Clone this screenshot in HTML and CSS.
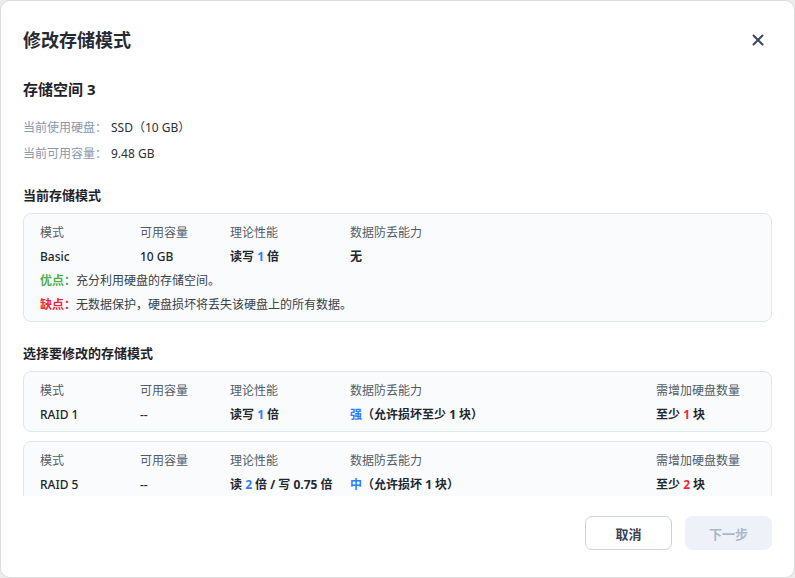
FILE: index.html
```html
<!DOCTYPE html>
<html lang="zh-CN">
<head>
    <meta charset="UTF-8">
    <meta name="viewport" content="width=device-width, initial-scale=1.0">
    <title>修改存储模式</title>
    <link rel="stylesheet" href="styles.css">
</head>
<body>
    <div class="dialog">
        <div class="dialog-header">
            <h1>修改存储模式</h1>
            <button class="close-btn" aria-label="关闭">
                <svg width="12" height="12" viewBox="0 0 12 12">
                    <path d="M1.5 1.5 L10.5 10.5 M10.5 1.5 L1.5 10.5" stroke="#3c4657" stroke-width="2" stroke-linecap="round" fill="none"/>
                </svg>
            </button>
        </div>

        <div class="dialog-body">
            <h2 class="pool-name">存储空间 3</h2>
            <div class="info-row first">
                <span class="info-label">当前使用硬盘：</span>
                <span class="info-value">SSD（10 GB）</span>
            </div>
            <div class="info-row">
                <span class="info-label">当前可用容量：</span>
                <span class="info-value">9.48 GB</span>
            </div>

            <h3 class="section-title">当前存储模式</h3>
            <div class="mode-card">
                <div class="mode-grid">
                    <span class="col-head">模式</span>
                    <span class="col-head">可用容量</span>
                    <span class="col-head">理论性能</span>
                    <span class="col-head">数据防丢能力</span>
                    <span></span>
                    <span class="col-val">Basic</span>
                    <span class="col-val">10 GB</span>
                    <span class="col-val strong">读写 <em class="blue">1</em> 倍</span>
                    <span class="col-val strong">无</span>
                    <span></span>
                </div>
                <div class="note"><b class="good">优点：</b>充分利用硬盘的存储空间。</div>
                <div class="note"><b class="bad">缺点：</b>无数据保护，硬盘损坏将丢失该硬盘上的所有数据。</div>
            </div>

            <h3 class="section-title">选择要修改的存储模式</h3>
            <div class="mode-card">
                <div class="mode-grid">
                    <span class="col-head">模式</span>
                    <span class="col-head">可用容量</span>
                    <span class="col-head">理论性能</span>
                    <span class="col-head">数据防丢能力</span>
                    <span class="col-head">需增加硬盘数量</span>
                    <span class="col-val">RAID 1</span>
                    <span class="col-val">--</span>
                    <span class="col-val strong">读写 <em class="blue">1</em> 倍</span>
                    <span class="col-val strong"><em class="blue">强</em>（允许损坏至少 1 块）</span>
                    <span class="col-val strong">至少 <em class="red">1</em> 块</span>
                </div>
            </div>
            <div class="mode-card">
                <div class="mode-grid">
                    <span class="col-head">模式</span>
                    <span class="col-head">可用容量</span>
                    <span class="col-head">理论性能</span>
                    <span class="col-head">数据防丢能力</span>
                    <span class="col-head">需增加硬盘数量</span>
                    <span class="col-val">RAID 5</span>
                    <span class="col-val">--</span>
                    <span class="col-val strong">读 <em class="blue">2</em> 倍 / 写 0.75 倍</span>
                    <span class="col-val strong"><em class="blue">中</em>（允许损坏 1 块）</span>
                    <span class="col-val strong">至少 <em class="red">2</em> 块</span>
                </div>
            </div>
        </div>

        <div class="dialog-footer">
            <button class="btn btn-cancel">取消</button>
            <button class="btn btn-next" disabled>下一步</button>
        </div>
    </div>
</body>
</html>
```

FILE: styles.css
```css
* {
    box-sizing: border-box;
}

html, body {
    margin: 0;
    padding: 0;
    height: 100%;
}

body {
    font-family: 'Noto Sans', 'Noto Sans CJK SC', sans-serif;
    background-color: #ececec;
    color: #1f2329;
    overflow: hidden;
}

.dialog {
    display: flex;
    flex-direction: column;
    width: 795px;
    height: 578px;
    background-color: white;
    border: 1px solid #dcdcdc;
    border-radius: 10px;
    overflow: hidden;
}

.dialog-header {
    display: flex;
    justify-content: space-between;
    align-items: center;
    padding: 27px 22px 0 22px;
}

.dialog-header h1 {
    margin: 0;
    font-size: 18px;
    line-height: 24px;
    font-weight: 700;
    color: #262a33;
}

.close-btn {
    display: flex;
    align-items: center;
    justify-content: center;
    width: 20px;
    height: 20px;
    padding: 0;
    margin-right: 4px;
    border: none;
    background: none;
    cursor: pointer;
}

.dialog-body {
    flex: 1;
    overflow: hidden;
    padding: 27px 22px 0 22px;
}

.pool-name {
    margin: 0;
    font-size: 15px;
    line-height: 20px;
    font-weight: 700;
    color: #1f2329;
}

.info-row {
    display: flex;
    margin-top: 6px;
    font-size: 12px;
    line-height: 20px;
}

.info-row.first {
    margin-top: 19px;
}

.info-label {
    width: 88px;
    color: #8797b0;
}

.info-value {
    color: #2b2f36;
}

.section-title {
    margin: 21px 0 8px 0;
    font-size: 13px;
    line-height: 20px;
    font-weight: 700;
    color: #1f2329;
}

.mode-card {
    padding: 7px 16px 4px 16px;
    margin-bottom: 9px;
    background-color: #f9fbfd;
    border: 1px solid #e0e6ee;
    border-radius: 8px;
}

.mode-grid {
    display: grid;
    grid-template-columns: 100px 90px 120px 1fr 99px;
    font-size: 12px;
    line-height: 24px;
}

.col-head {
    color: #555b66;
}

.col-val {
    color: #23272e;
    font-weight: 500;
    white-space: nowrap;
}

.col-val.strong {
    font-weight: 700;
}

.mode-grid em {
    font-style: normal;
}

.blue {
    color: #2f7cf6;
}

.red {
    color: #f0263a;
}

.note {
    font-size: 12px;
    line-height: 24px;
    color: #3a3f47;
}

.note b {
    font-weight: 700;
}

.good {
    color: #4fae4e;
}

.bad {
    color: #f0263a;
}

.dialog-footer {
    display: flex;
    justify-content: flex-end;
    gap: 13px;
    height: 81px;
    padding: 20px 22px 0 0;
}

.btn {
    width: 87px;
    height: 34px;
    font-family: inherit;
    font-size: 13px;
    font-weight: 700;
    border-radius: 7px;
    cursor: pointer;
}

.btn-cancel {
    background-color: white;
    color: #3a4250;
    border: 1px solid #c8d2df;
}

.btn-next {
    background-color: #eef2f8;
    color: #a9b7ca;
    border: 1px solid #eef2f8;
    cursor: default;
}
```
